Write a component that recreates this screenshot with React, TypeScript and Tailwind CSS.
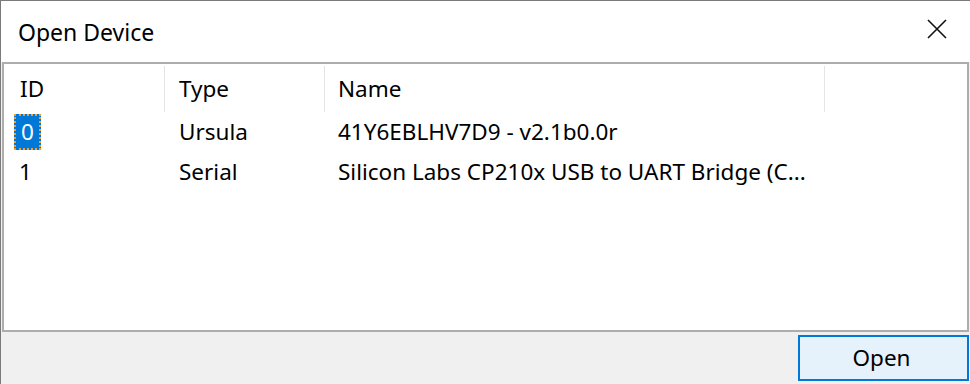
const rows = [
  { id: "0", type: "Ursula", name: "41Y6EBLHV7D9 - v2.1b0.0r" },
  { id: "1", type: "Serial", name: "Silicon Labs CP210x USB to UART Bridge (C..." },
];

const font = { fontFamily: '"Noto Sans", "Open Sans", sans-serif' };

export default function App() {
  return (
    <div
      className="flex h-[384px] w-[970px] flex-col overflow-hidden border-l border-t border-[#7a7a7a] bg-[#f0f0f0] text-[#000]"
      style={font}
    >
      {/* title bar */}
      <div className="flex h-[61px] shrink-0 items-center justify-between bg-white pl-[17px] pr-[22px]">
        <span className="pt-[2px] text-[23px]">Open Device</span>
        <svg width="22" height="22" viewBox="0 0 22 22" className="mb-[6px]">
          <path d="M2 2 L20 20 M20 2 L2 20" stroke="#111" strokeWidth="1.6" fill="none" />
        </svg>
      </div>

      {/* list view */}
      <div className="ml-[1px] h-[270px] w-[967px] shrink-0 border-2 border-[#adadad] bg-white">
        <div className="flex h-[49px] items-center text-[22.5px]">
          <div className="flex h-[46px] w-[161px] items-center border-r border-[#e5e5e5] pl-[16px]">ID</div>
          <div className="flex h-[46px] w-[160px] items-center border-r border-[#e5e5e5] pl-[14px]">Type</div>
          <div className="flex h-[46px] w-[500px] items-center border-r border-[#e5e5e5] pl-[13px]">Name</div>
        </div>
        {rows.map((r, i) => (
          <div key={r.id} className="flex h-[40px] items-center pb-[3px] text-[22.5px]">
            <div className="w-[161px] pl-[10px]">
              {i === 0 ? (
                <span className="inline-block bg-[#0078d7] px-[7px] leading-[36px] text-white outline-2 outline-dotted outline-[#f0a030] -outline-offset-2">
                  {r.id}
                </span>
              ) : (
                <span className="pl-[5px]">{r.id}</span>
              )}
            </div>
            <div className="w-[160px] pl-[14px]">{r.type}</div>
            <div className="w-[500px] whitespace-nowrap pl-[13px]">{r.name}</div>
          </div>
        ))}
      </div>

      {/* footer */}
      <div className="flex justify-end pr-[1px] pt-[3px]">
        <button className="flex h-[46px] w-[171px] items-center justify-center border-2 border-[#0078d7] bg-[#e5f1fb] pr-[4px] text-[22.5px]">
          Open
        </button>
      </div>
    </div>
  );
}
